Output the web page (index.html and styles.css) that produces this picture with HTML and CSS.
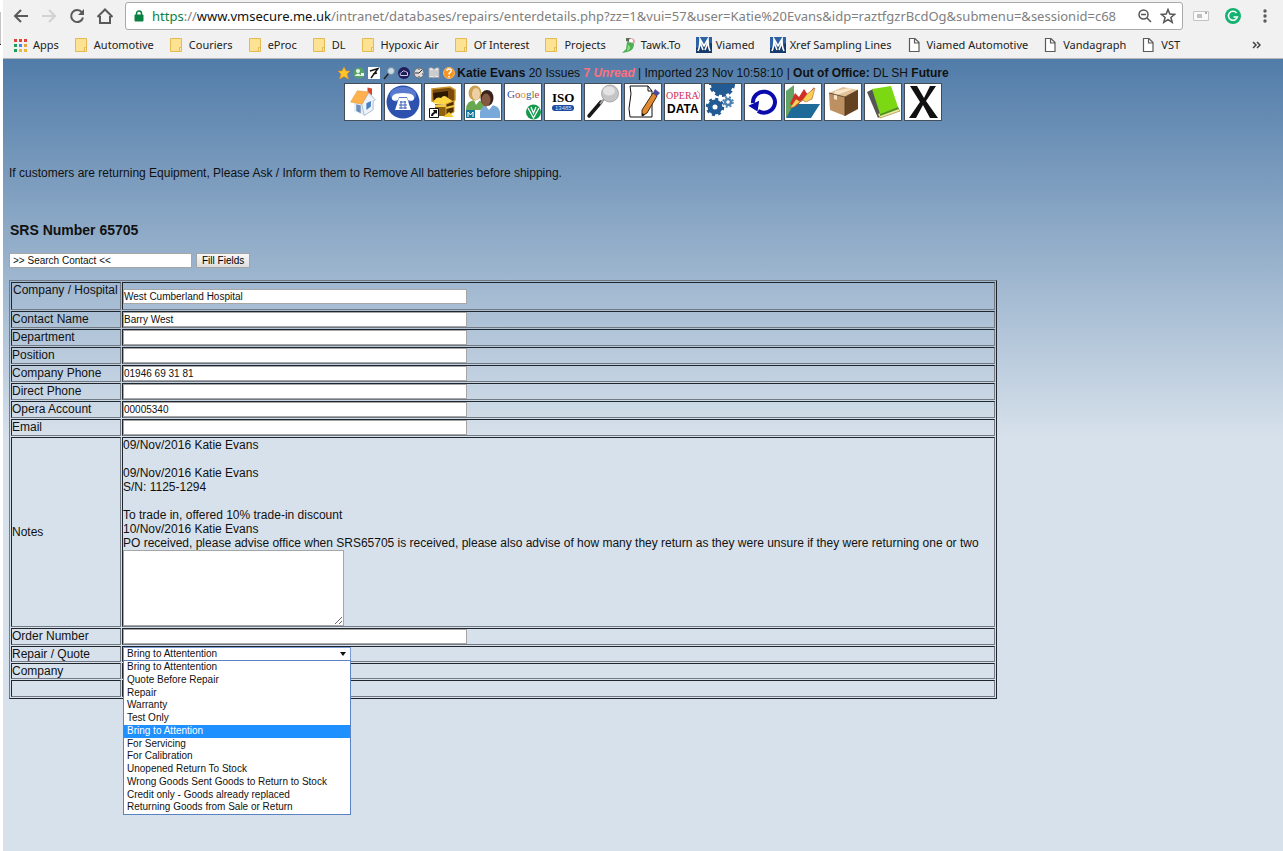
FILE: index.html
```html
<!DOCTYPE html>
<html lang="en">

<head>
    <meta charset="UTF-8" />
    <title>SRS Number 65705</title>
    <link rel="stylesheet" href="styles.css">
</head>

<body>
    <svg class="defs" aria-hidden="true">
        <symbol id="folder" viewBox="0 0 16 16">
            <path d="M1.500 1.500h11v13h-11z" fill="#fde293" stroke="#e3bb52" />
            <path d="M10.500 10.500h2v4h-2z" fill="#fde9a9" stroke="#e3bb52" />
        </symbol>
        <symbol id="page" viewBox="0 0 16 16">
            <path d="M2.500 1.500h5.500l4 4v9h-9.500zM7.500 1.500v4.500h4.500" fill="#fff" stroke="#5a5a5a" stroke-width="1.200" />
        </symbol>
        <symbol id="viamed" viewBox="0 0 16 16">
            <path d="M0 0h16v16H0z" fill="#173a6c" />
            <path d="M0 0h16v6L0 11z" fill="#2d62a4" />
            <path d="M2 14Q4 10 4 2L8 9l4-7q0 8 2 12M4 5l3 8M12 5L9 13" fill="none" stroke="#fff" stroke-width="1.600" />
        </symbol>
    </svg>

    <header class="browser">
        <div class="toolbar">
            <button class="tool" aria-label="Back">
                <svg width="16" height="16" viewBox="0 0 16 16" fill="none" stroke="#5a5a5a" stroke-width="2"><path d="M15 8H2M8 2L2 8l6 6" /></svg>
            </button>
            <button class="tool" aria-label="Forward" disabled>
                <svg width="16" height="16" viewBox="0 0 16 16" fill="none" stroke="#d2d2d2" stroke-width="2"><path d="M1 8h13M8 2l6 6-6 6" /></svg>
            </button>
            <button class="tool" aria-label="Reload">
                <svg width="16" height="16" viewBox="0 0 16 16" fill="none" stroke="#5a5a5a" stroke-width="2"><path d="M13 4.500A6 6 0 1 0 14 9.500" /><path d="M15 1v6H9z" fill="#5a5a5a" stroke="none" /></svg>
            </button>
            <button class="tool" aria-label="Home">
                <svg width="16" height="16" viewBox="1 0 16 16" fill="none" stroke="#5a5a5a" stroke-width="2"><path d="M1.500 9L9 1.500 16.500 9M4 8v7h10V8" /></svg>
            </button>
            <div class="address">
                <svg width="10" height="12" viewBox="0 0 10 12"><path d="M1 5h8v6H1z" fill="#0b8043" stroke="#0b8043" /><path d="M2.500 5V3.500a2.500 2.500 0 0 1 5 0V5" fill="none" stroke="#0b8043" stroke-width="1.500" /></svg>
                <div class="url"><span class="scheme">https</span>://<span class="host">www.vmsecure.me.uk</span>/intranet/databases/repairs/enterdetails.php?zz=1&amp;vui=57&amp;user=Katie%20Evans&amp;idp=raztfgzrBcdOg&amp;submenu=&amp;sessionid=c68</div>
                <svg width="14" height="14" viewBox="0 0 14 14" fill="none" stroke="#555" stroke-width="1.500"><circle cx="5.500" cy="5.500" r="4.500" /><path d="M9 9l4 4M3 5.500h5" /></svg>
                <svg width="16" height="16" viewBox="0 0 16 16" fill="none" stroke="#555" stroke-width="1.500"><path d="M8 1.500l1.800 4.600 4.900.3-3.800 3.100 1.300 4.800L8 11.600l-4.200 2.700 1.300-4.800L1.300 6.400l4.900-.3z" /></svg>
            </div>
            <svg class="ext" width="16" height="12" viewBox="0 0 16 12"><path d="M.5 1.500h15v9H.5z" fill="#fafafa" stroke="#c4c4c4" /><path d="M4 5h5M4 7h5" stroke="#888" /><path d="M12 2h2v2h-2z" fill="#aaa" /></svg>
            <svg class="ext" width="16" height="16" viewBox="0 0 16 16"><circle cx="8" cy="8" r="8" fill="#15b371" /><path d="M11.500 5A4.500 4.500 0 1 0 12.300 9H8.500" fill="none" stroke="#fff" stroke-width="1.600" /></svg>
            <button class="tool menu" aria-label="Menu">
                <svg width="4" height="14" viewBox="0 0 4 14" fill="#5a5a5a"><circle cx="2" cy="2" r="1.700" /><circle cx="2" cy="7" r="1.700" /><circle cx="2" cy="12" r="1.700" /></svg>
            </button>
        </div>
        <nav class="bookmarks">
            <a href="#"><svg viewBox="0 0 16 16"><path d="M1 2h3v3H1zM6 2h3v3H6zM11 2h3v3h-3z" fill="#dc4437" /><path d="M1 7h3v3H1z" fill="#1a9f5b" /><path d="M6 7h3v3H6z" fill="#4285f4" /><path d="M11 7h3v3h-3z" fill="#e8a33b" /><path d="M1 12h3v3H1z" fill="#1a9f5b" /><path d="M6 12h3v3H6zM11 12h3v3h-3z" fill="#e8b93b" /></svg>Apps</a>
            <a href="#"><svg><use href="#folder" /></svg>Automotive</a>
            <a href="#"><svg><use href="#folder" /></svg>Couriers</a>
            <a href="#"><svg><use href="#folder" /></svg>eProc</a>
            <a href="#"><svg><use href="#folder" /></svg>DL</a>
            <a href="#"><svg><use href="#folder" /></svg>Hypoxic Air</a>
            <a href="#"><svg><use href="#folder" /></svg>Of Interest</a>
            <a href="#"><svg><use href="#folder" /></svg>Projects</a>
            <a href="#"><svg viewBox="0 0 16 16"><path d="M5 1h5l-2 4-3-1z" fill="#5b6b58" /><path d="M8 2q5-2 6 2l-1 3-5-1z" fill="#e79aa2" /><circle cx="10" cy="4" r="2" fill="#fff" /><path d="M6 5q5 0 7 2 0 5-4 7l-3 1-5 1 4-4z" fill="#4cb152" /><path d="M7 8q4 2 1 5l-2 1z" fill="#8ddb83" /></svg>Tawk.To</a>
            <a href="#"><svg><use href="#viamed" /></svg>Viamed</a>
            <a href="#"><svg><use href="#viamed" /></svg>Xref Sampling Lines</a>
            <a href="#"><svg><use href="#page" /></svg>Viamed Automotive</a>
            <a href="#"><svg><use href="#page" /></svg>Vandagraph</a>
            <a href="#"><svg><use href="#page" /></svg>VST</a>
            <button class="more" aria-label="More bookmarks">
                <svg width="9" height="8" viewBox="0 0 9 8" fill="none" stroke="#444" stroke-width="1.500"><path d="M1 1l3 3-3 3M5 1l3 3-3 3" /></svg>
            </button>
        </nav>
    </header>

    <main class="intranet">
        <div class="status">
            <span class="mini">
                <svg viewBox="0 0 14 14"><path d="M7 1l2 4h4l-3 3 1.500 5L7 10.500 2.500 13 4 8 1 5h4z" fill="#ffc62b" stroke="#e98c13" stroke-width=".6" /></svg>
                <svg viewBox="0 0 14 14"><circle cx="7" cy="7" r="5.500" fill="#57a267" /><circle cx="6" cy="5" r="2" fill="#e7f5e9" /><path d="M2.500 10q3.500-5 7 0zM9 7h3v3H9z" fill="#e7f5e9" /></svg>
                <svg viewBox="0 0 14 14"><path d="M1 1h12v12H1z" fill="#fff" /><path d="M3 5l8-2.500L4 12M6 8l4-1" fill="none" stroke="#111" stroke-width="1.400" /></svg>
                <svg viewBox="0 0 14 14"><path d="M7 7l-5 6" stroke="#222" stroke-width="1.500" /><circle cx="9" cy="5" r="3.500" fill="#c7dce8" stroke="#7e8e9a" /></svg>
                <svg viewBox="0 0 14 14"><circle cx="7" cy="7" r="6" fill="#201b59" /><path d="M3.500 9.500q-1.500-2 1-3 1.500-3 4-1 3 0 2 4z" fill="none" stroke="#c9cce9" /></svg>
                <svg viewBox="0 0 14 14"><circle cx="7" cy="7" r="5" fill="#ddd" stroke="#686868" /><path d="M7 7l3-3M7 7H4M7 3v1M7 10v1M3 7h1M10 8h1" stroke="#333" /></svg>
                <svg viewBox="0 0 14 14"><path d="M2 2q3-1 5 1 3-2 5-1v10q-3-1-5 0-3-1-5 0z" fill="#eee" stroke="#8d98a4" /><path d="M7 3v9M3 5h3M3 7h3M3 9h3M8 5h3M8 7h3M8 9h3" stroke="#999" stroke-width=".8" /></svg>
                <svg viewBox="0 0 14 14"><circle cx="7" cy="7" r="5.500" fill="#f79420" stroke="#ffb65d" /><path d="M5 5q0-2 2-2 3 0 2 2.500Q7 6.500 7 8.500M7 10v1.500" fill="none" stroke="#fff" stroke-width="1.500" /></svg>
            </span>
            <b>Katie Evans</b> 20 Issues <span class="unread">7 <i>Unread</i></span> | Imported 23 Nov 10:58:10 | <b>Out of Office:</b> DL SH <b>Future</b>
        </div>

        <nav class="icons">
            <a href="#" aria-label="Home"><svg viewBox="2 2 32 32"><path d="M10 17l9 2v11l-9-4z" fill="#e5edf7" /><path d="M19 19l8-6v11l-8 6z" fill="#a9c4e4" /><path d="M22 9V5l4 1v6z" fill="#d4472b" /><path d="M17 20l6-10 6 6-2 1v8l-8 5z" fill="#eef3fa" stroke="#9cb3cf" stroke-width=".7" /><path d="M13 8l10 1-6 11-10-2z" fill="#ffb14d" stroke="#e8963b" stroke-width=".5" /><path d="M12 20l4 1v7l-4-2z" fill="#6d8eb9" /><path d="M21 19l4-2v5l-4 3z" fill="#477fc5" /></svg></a>
            <a href="#" aria-label="Phone"><svg viewBox="0 0 36 36"><circle cx="18" cy="18" r="16.500" fill="#2c51ae" /><ellipse cx="18" cy="11" rx="13" ry="8" fill="#587bd0" /><path d="M7 15q-1-6 11-6t11 6q-1 3-6 1l-1-3h-8l-1 3q-5 2-6-1z" fill="#fff" /><path d="M14 14h8l4 12H10z" fill="#fff" /><path d="M15 18h6M14 21h8M14 24h8M16 17v8M20 17v8" stroke="#3c5eb4" /></svg></a>
            <a href="#" aria-label="Stores"><svg viewBox="0 0 36 36"><path d="M7 5l18-2 5 3v10l-3 3L7 17z" fill="#7a4b10" stroke="#c99220" stroke-width="1.500" /><path d="M8 9l15-2v8L9 16z" fill="#2b1902" /><path d="M8 19q3-7 8-5 3-4 7 0l6 4-8 3z" fill="#ffd745" /><path d="M10 20l11 1v11H10z" fill="#906011" /><path d="M21 20l8-3v11l-8 4z" fill="#513005" stroke="#dba42b" /><path d="M10 22h11M21 24l8-2" stroke="#f4ca3e" stroke-width="2" /><path d="M18 33l6-5 5 5z" fill="#f3cb35" /><path d="M4.500 24.500h9v9h-9z" fill="#fff" stroke="#111" /><path d="M6 32q0-3 3-4l-1-2h4v4l-1-1q-3 1-3 3z" fill="#111" /></svg></a>
            <a href="#" aria-label="Contacts"><svg viewBox="0 0 36 36"><path d="M1 26q0-10 10-10 7 0 9 6l-4 4z" fill="#69a850" /><path d="M9 16l2 5 4-5z" fill="#fff" /><ellipse cx="10" cy="9" rx="6.500" ry="7.500" fill="#c8a252" /><ellipse cx="11" cy="10" rx="4" ry="6" fill="#efcfa5" /><path d="M15 34V28q1-7 10-7t10 7v6z" fill="#79a8da" /><path d="M20 21l4 5 4-5z" fill="#fff" /><ellipse cx="22" cy="14" rx="6.500" ry="8" fill="#37231a" /><ellipse cx="21" cy="16" rx="4.500" ry="6.500" fill="#865a42" /><path d="M1 26h9v8H1z" fill="#15749c" /><path d="M3 33v-5l2.500 3L8 28v5" fill="none" stroke="#fff" /></svg></a>
            <a href="#" aria-label="Google"><svg viewBox="0 0 36 36"><text class="google" x="2" y="14"><tspan fill="#3454b8">G</tspan><tspan fill="#c73a32">o</tspan><tspan fill="#d9a624">o</tspan><tspan fill="#3454b8">g</tspan><tspan fill="#369c4b">l</tspan><tspan fill="#c73a32">e</tspan></text><circle cx="28.500" cy="28" r="7.500" fill="#11984b" /><path d="M23 24l5.500 10L34 24M26 23l2.500 6 2.500-6" fill="none" stroke="#fff" stroke-width="1.300" /></svg></a>
            <a href="#" aria-label="ISO"><svg viewBox="0 0 36 36"><text class="iso" x="7" y="18">ISO</text><rect x="7" y="21" width="22" height="6" rx="3" fill="#1f4b9c" /><text class="iso-no" x="10" y="26">13485</text></svg></a>
            <a href="#" aria-label="Search"><svg viewBox="0 0 36 36"><path d="M16 18L4 32" stroke="#181818" stroke-width="3.500" stroke-linecap="round" /><path d="M20 14l-5 6" stroke="#999" stroke-width="2" /><circle cx="25" cy="9.500" r="8.500" fill="#c5c5c5" stroke="#aaa" /><ellipse cx="24" cy="7" rx="6" ry="4.500" fill="#e3e3e3" /></svg></a>
            <a href="#" aria-label="Edit"><svg viewBox="0 0 36 36"><path d="M5 2q2 8 0 15t0 16h22V7l-4-5z" fill="#fff" stroke="#111" /><path d="M23 2v5h4" fill="none" stroke="#111" /><path d="M28 9l4 3-10 17-5 3 0-6z" fill="#e18a31" stroke="#4a290f" /><path d="M28 9l2-4 5 4-3 3z" fill="#4b4a9b" /><path d="M17 32v-3l3 2z" fill="#111" /></svg></a>
            <a href="#" aria-label="Opera data"><svg viewBox="0 0 36 36"><text class="opera" x="1" y="15" fill="#d02a5c">OPERA</text><path d="M32 7q5 3 1 8" fill="none" stroke="#e8819e" /><text class="data" x="2" y="29">DATA</text></svg></a>
            <a href="#" aria-label="Settings"><svg viewBox="0 0 36 36" fill="none" stroke="#225b94"><circle cx="17" cy="0" r="9" stroke-width="4" /><circle cx="17" cy="0" r="11.500" stroke-width="3" stroke-dasharray="4 3" /><circle cx="17" cy="0" r="8" fill="#225b94" /><circle cx="10" cy="23" r="5" stroke-width="5" /><circle cx="10" cy="23" r="8" stroke-width="2.500" stroke-dasharray="3 3.280" /><circle cx="23" cy="18" r="3" stroke="#4b81ae" stroke-width="2.500" /><circle cx="23" cy="18" r="5" stroke="#4b81ae" stroke-width="1.500" stroke-dasharray="2 2" /></svg></a>
            <a href="#" aria-label="Refresh"><svg viewBox="0 0 36 36"><path d="M8 19A11 10.500 0 1 1 13 27" fill="none" stroke="#0b0bab" stroke-width="4" /><path d="M4 19h12l-6 9z" fill="#0b0bab" transform="rotate(-25 10 22)" /></svg></a>
            <a href="#" aria-label="Charts"><svg viewBox="0 0 36 36"><path d="M1 7l8-6v22l-8 11z" fill="#63a363" /><path d="M9 20h26l-9 14H1z" fill="#1e6a99" /><path d="M5 20l5-11 4 4 5-8 4 6 6-8-2 12-6 2-4-1-6 7z" fill="#d12e25" /><path d="M5 24l6-9 5 3 6-8 8-6-3 11-6 3-4-2-8 7z" fill="#f6cf54" stroke="#9a512b" stroke-width=".5" /></svg></a>
            <a href="#" aria-label="Parcels"><svg viewBox="0 0 36 36"><path d="M4 9l16 4v19L5 26z" fill="#bc9060" /><path d="M20 13l13-7v19l-13 7z" fill="#644322" /><path d="M4 9l14-6 15 3-13 7z" fill="#e3c196" /><path d="M10 7l15-3 3 1-16 6v5l-3-1v-5z" fill="#f5e5cb" /><path d="M4 9l16 4 13-7M20 13v19" fill="none" stroke="#4b3119" stroke-width=".8" /></svg></a>
            <a href="#" aria-label="Address book"><svg viewBox="0 0 36 36"><path d="M2 8l6-3 9 26-4 3z" fill="#555" /><path d="M13 30l19-7 3 4-20 7z" fill="#f3e9a4" stroke="#98843c" stroke-width=".7" /><path d="M7 5l19-3 7 21-18 7z" fill="#7bd812" /><path d="M15 30l18-7 1 2-19 7z" fill="#49961a" /></svg></a>
            <a href="#" aria-label="Close"><svg viewBox="0 0 36 36"><path d="M5 2h7l7 12 6-12h6L21 17l12 17h-8l-7-13-7 13H4l11-16z" fill="#111" /></svg></a>
        </nav>

        <p class="notice">If customers are returning Equipment, Please Ask / Inform them to Remove All batteries before shipping.</p>

        <h1>SRS Number 65705</h1>

        <form class="search">
            <input type="text" aria-label="Search contact" value="&gt;&gt; Search Contact &lt;&lt;">
            <button type="button">Fill Fields</button>
        </form>

        <table class="details">
            <tr class="first">
                <td><label for="company">Company / Hospital</label></td>
                <td><input type="text" id="company" value="West Cumberland Hospital"></td>
            </tr>
            <tr>
                <td><label for="contact">Contact Name</label></td>
                <td><input type="text" id="contact" value="Barry West"></td>
            </tr>
            <tr>
                <td><label for="department">Department</label></td>
                <td><input type="text" id="department"></td>
            </tr>
            <tr>
                <td><label for="position">Position</label></td>
                <td><input type="text" id="position"></td>
            </tr>
            <tr>
                <td><label for="phone">Company Phone</label></td>
                <td><input type="text" id="phone" value="01946 69 31 81"></td>
            </tr>
            <tr>
                <td><label for="direct">Direct Phone</label></td>
                <td><input type="text" id="direct"></td>
            </tr>
            <tr>
                <td><label for="account">Opera Account</label></td>
                <td><input type="text" id="account" value="00005340"></td>
            </tr>
            <tr>
                <td><label for="email">Email</label></td>
                <td><input type="text" id="email"></td>
            </tr>
            <tr>
                <td><label for="notes">Notes</label></td>
                <td class="notes">
                    09/Nov/2016 Katie Evans<br><br>
                    09/Nov/2016 Katie Evans<br>
                    S/N: 1125-1294<br><br>
                    To trade in, offered 10% trade-in discount<br>
                    10/Nov/2016 Katie Evans<br>
                    PO received, please advise office when SRS65705 is received, please also advise of how many they return as they were unsure if they were returning one or two
                    <textarea id="notes"></textarea>
                </td>
            </tr>
            <tr>
                <td><label for="order">Order Number</label></td>
                <td><input type="text" id="order"></td>
            </tr>
            <tr class="short">
                <td><label for="repair">Repair / Quote</label></td>
                <td>
                    <div class="picker">
                        <select id="repair">
                            <option>Bring to Attentention</option>
                        </select>
                        <ul class="options">
                            <li>Bring to Attentention</li>
                            <li>Quote Before Repair</li>
                            <li>Repair</li>
                            <li>Warranty</li>
                            <li>Test Only</li>
                            <li class="selected">Bring to Attention</li>
                            <li>For Servicing</li>
                            <li>For Calibration</li>
                            <li>Unopened Return To Stock</li>
                            <li>Wrong Goods Sent Goods to Return to Stock</li>
                            <li>Credit only - Goods already replaced</li>
                            <li>Returning Goods from Sale or Return</li>
                        </ul>
                    </div>
                </td>
            </tr>
            <tr class="short">
                <td>Company</td>
                <td></td>
            </tr>
            <tr>
                <td></td>
                <td></td>
            </tr>
        </table>
    </main>
</body>

</html>
```
FILE: styles.css
```css
* {
    box-sizing: border-box;
}

body {
    margin: 0;
    padding-left: 3px;
    min-height: 100vh;
    display: flex;
    flex-direction: column;
    background: #fff linear-gradient(#c6c3c6 32px, #222 32px) 0 12px / 1px 33px no-repeat;
    font: 12px/14px "Liberation Sans", Arial, sans-serif;
    color: #111;
}

.defs {
    display: none;
}

button,
input,
select,
textarea {
    font-family: inherit;
    margin: 0;
}

/* browser bars */
.browser {
    padding-bottom: 1px;
    background: #f1f1f1;
    border-bottom: 1px solid #b4b6b8;
    font-family: "Noto Sans", "Open Sans", sans-serif;
}

.toolbar {
    display: flex;
    align-items: center;
    height: 32px;
    padding: 0 16px 0 10px;
    gap: 12px;
}

.tool,
.more {
    display: flex;
    padding: 0;
    border: none;
    background: none;
}

.menu {
    margin-left: 6px;
}

.address {
    flex: 1;
    min-width: 0;
    height: 28px;
    display: flex;
    align-items: center;
    gap: 8px;
    padding: 0 6px 0 8px;
    margin: 0 -2px 0 0;
    background: #fff;
    border: 1px solid #a9aba9;
    border-radius: 3px;
}

.address svg {
    flex: none;
}

.url {
    flex: 1;
    overflow: hidden;
    white-space: nowrap;
    font-size: 13px;
    line-height: 20px;
    color: #808080;
}

.scheme {
    color: #0b8043;
}

.host {
    color: #111;
}

.ext {
    flex: none;
    margin-right: 4px;
}

.bookmarks {
    display: flex;
    align-items: center;
    height: 25px;
    padding: 0 22px 0 10px;
    gap: 15px;
    font-size: 11px;
}

.bookmarks a {
    display: flex;
    align-items: center;
    gap: 4px;
    color: #222;
    text-decoration: none;
    white-space: nowrap;
}

.bookmarks a svg {
    width: 16px;
    height: 16px;
    flex: none;
}

.more {
    margin-left: auto;
}

/* page */
.intranet {
    flex: 1;
    padding: 7px 6px;
    background: #d7e1eb linear-gradient(#517ca9, #d7e1eb) 0 0 / 100% 380px no-repeat;
}

.status {
    display: flex;
    justify-content: center;
    white-space: pre;
}

.mini {
    display: flex;
    gap: 1px;
    margin-right: 1px;
}

.mini svg {
    width: 14px;
    height: 14px;
}

.unread {
    color: #ff6f7d;
    font-weight: bold;
}

.icons {
    display: flex;
    justify-content: center;
    gap: 2px;
    margin-top: 3px;
}

.icons a {
    width: 38px;
    height: 38px;
    border: 1px solid #444c58;
    background: #fff;
}

.icons svg {
    display: block;
    width: 36px;
    height: 36px;
}

.google {
    font: 11px "Liberation Serif", serif;
}

.iso {
    font: bold 13px "Liberation Serif", serif;
}

.iso-no {
    font: 6px "Liberation Sans", sans-serif;
    fill: #cfe0ff;
}

.opera {
    font: 10px "Liberation Serif", serif;
}

.data {
    font: bold 12px "Liberation Sans", sans-serif;
}

.notice {
    margin: 45px 0 0;
}

h1 {
    margin: 42px 1px 0;
    font-size: 14px;
    line-height: 16px;
}

.search {
    display: flex;
    gap: 4px;
    margin: 15px 0 12px;
}

.search input {
    width: 183px;
    height: 15px;
    padding: 0 3px;
}

.search button {
    height: 15px;
    padding: 0 5px;
    border: 1px solid #a4a4a4;
    background: linear-gradient(#f8f8f8, #dedede);
    font-size: 10px;
    line-height: 13px;
}

input,
textarea {
    display: block;
    border: 1px solid #a6a6a6;
    background: #fff;
    font-size: 10px;
    color: #111;
}

.details {
    min-width: 988px;
    border: 1px solid;
    border-color: #717a84 #20252b #20252b #717a84;
    border-spacing: 1px;
}

.details td {
    height: 17px;
    padding: 0;
    border: 1px solid;
    border-color: #20252b #717a84 #717a84 #20252b;
    white-space: nowrap;
}

.details td:first-child {
    width: 110px;
}

.details label {
    display: block;
    padding-bottom: 1px;
}

.details .first td {
    height: 28px;
}

.details .first td:first-child {
    padding-left: 1px;
    vertical-align: top;
}

.details .short td {
    height: 16px;
}

.details .short label {
    padding: 0;
}

.details input {
    width: 344px;
    height: 15px;
    padding: 0;
}

.notes textarea {
    width: 221px;
    height: 76px;
}

.picker {
    position: relative;
    width: 228px;
}

.picker select {
    display: block;
    width: 228px;
    height: 14px;
    padding: 0 3px;
    border: 1px solid #7a9bd3;
    border-radius: 0;
    appearance: none;
    background: #fff;
    font-size: 10px;
    line-height: 12px;
    color: #111;
}

.picker::after {
    content: "";
    position: absolute;
    top: 5px;
    right: 5px;
    border: 3px solid transparent;
    border-top: 4px solid #111;
    border-bottom: none;
}

.options {
    position: absolute;
    top: 13px;
    left: 0;
    width: 228px;
    height: 155px;
    margin: 0;
    padding: 0;
    display: grid;
    grid-auto-rows: 1fr;
    list-style: none;
    border: 1px solid #5b83c4;
    background: #fff;
    font-size: 10px;
    line-height: 12px;
}

.options li {
    padding-left: 3px;
}

.options .selected {
    background: #1e90ff;
    color: #fff;
}
```
